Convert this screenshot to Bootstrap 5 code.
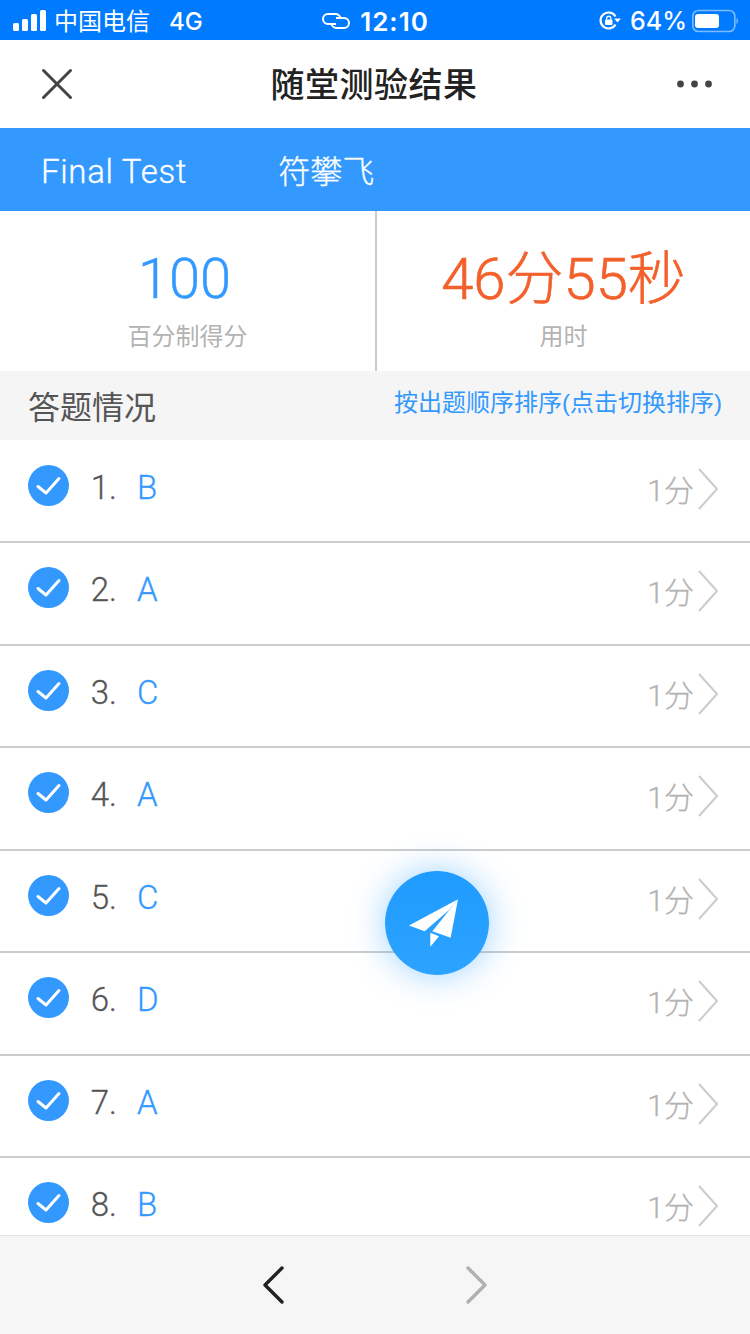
<!DOCTYPE html>
<html lang="zh">
<head>
  <meta charset="UTF-8" />
  <meta name="viewport" content="width=device-width, initial-scale=1" />
  <title>随堂测验结果</title>
  <link href="https://cdn.jsdelivr.net/npm/bootstrap@5.3.3/dist/css/bootstrap.min.css" rel="stylesheet" />
  <style>
    body {
      width: 750px;
      height: 1334px;
      overflow: hidden;
      background: #fff;
      font-family: "Liberation Sans", "Noto Sans CJK SC", sans-serif;
    }
    .screen { width: 750px; height: 1334px; overflow: hidden; }
    .status-bar {
      height: 40px;
      background: #007aff;
      color: #fff;
      font-family: Inter, "Noto Sans CJK SC", sans-serif;
      font-size: 25px;
      padding: 1px 12px 0 13px;
    }
    .status-bar span { padding-top: 2px; }
    .status-left, .status-right { width: 300px; }
    .carrier { margin-left: 8px; font-size: 24px; }
    .net { margin-left: 19px; font-size: 24px; font-weight: 500; }
    .clock { font-weight: 600; font-size: 26px; letter-spacing: 1px; margin-left: 10px; }
    .pct { font-size: 25px; font-weight: 500; margin: 0 5px 0 9px; }
    .top-nav { height: 88px; padding: 0 38px 0 41px; }
    .top-title { font-size: 34px; letter-spacing: .5px; color: #222; font-weight: 500; line-height: 91px; padding-right: 2px; }
    .test-band {
      height: 83px;
      background: #3399ff;
      color: #fff;
      font-family: Roboto, "Noto Sans CJK SC", sans-serif;
      font-weight: 300;
      font-size: 33px;
      padding: 4px 0 0 41px;
      gap: 91px;
      letter-spacing: .7px;
      -webkit-text-stroke: .3px;
    }
    .test-user { font-size: 32px; letter-spacing: 0; }
    .stats-row { height: 160px; }
    .stat-cell { width: 50%; padding-top: 32px; text-align: center; }
    .stat-cell + .stat-cell { border-left: 2px solid #ccc; }
    .stat-num {
      font-family: Roboto, "Noto Sans CJK SC", sans-serif;
      font-weight: 300;
      font-size: 56px;
      line-height: 72px;
      color: #3399ff;
      padding-right: 6px;
      -webkit-text-stroke: .4px;
    }
    .stat-time { color: #f4602c; font-size: 58px; padding-right: 0; -webkit-text-stroke: .6px; }
    .stat-cap { font-size: 24px; color: #b3b3b3; line-height: 36px; margin-top: 4px; }
    .section-head { height: 69px; background: #f5f5f5; padding: 0 28px; }
    .section-title { font-size: 32px; color: #555; line-height: 74px; }
    .section-sort { font-size: 24px; color: #3399ff; line-height: 64px; }
    .answer-list { height: 795px; padding-top: .75px; overflow: hidden; }
    .answer-row { height: 102.5px; border-bottom: 2px solid #ccc; padding: 24px 32px 0 28px; }
    .tick { width: 41px; height: 41px; flex: none; }
    .q-no, .q-ans {
      font-family: Roboto, "Noto Sans CJK SC", sans-serif;
      font-weight: 300;
      font-size: 33px;
      line-height: 44px;
      margin-top: 1px;
      -webkit-text-stroke: .3px;
    }
    .q-no { width: 48px; color: #555; text-align: right; }
    .q-ans { margin-left: 20px; color: #3399ff; }
    .q-score {
      font-family: Roboto, "Noto Sans CJK SC", sans-serif;
      font-weight: 300;
      font-size: 30px;
      color: #b3b3b3;
      line-height: 46px;
      margin-top: 3px;
      -webkit-text-stroke: .3px;
    }
    .row-arrow { width: 20px; height: 44px; margin-left: 4px; margin-top: 2px; }
    .bottom-bar { height: 99px; background: #f6f6f6; border-top: 1px solid #e4e4e4; }
    .bottom-btn { position: absolute; top: 30px; width: 24px; height: 38px; }
    .bottom-prev { left: 262px; }
    .bottom-next { left: 464px; }
    .float-send {
      position: absolute;
      left: 385px;
      top: 871px;
      width: 104px;
      height: 104px;
      border-radius: 50%;
      background: linear-gradient(to bottom, #1f9bff, #2ca3ff);
      box-shadow: 0 0 34px rgba(38, 158, 255, .45);
    }
    .float-plane { position: absolute; left: 24px; top: 28px; width: 49px; height: 48px; }
  </style>
</head>
<body>
  <div class="screen position-relative d-flex flex-column">

    <!-- Status bar -->
    <div class="status-bar d-flex align-items-center justify-content-between">
      <div class="status-left d-flex align-items-center">
        <svg width="33" height="21" viewBox="0 0 33 21" fill="#fff"><rect x="0" y="13" width="6" height="8" rx="1.5"/><rect x="9" y="9" width="6" height="12" rx="1.5"/><rect x="18" y="4" width="6" height="17" rx="1.5"/><rect x="27" y="0" width="6" height="21" rx="1.5"/></svg>
        <span class="carrier">中国电信</span>
        <span class="net">4G</span>
      </div>
      <div class="d-flex align-items-center">
        <svg width="28" height="16" viewBox="0 0 28 16" fill="none" stroke="#fff" stroke-width="2"><path d="M14 11H6a5 5 0 0 1 0-10h8a5 5 0 0 1 4.500 5"/><path d="M14 5h8a5 5 0 0 1 0 10h-8a5 5 0 0 1-4.500-5"/></svg>
        <span class="clock">12:10</span>
      </div>
      <div class="status-right d-flex align-items-center justify-content-end">
        <svg width="22" height="19" viewBox="0 0 22 19" fill="none"><path d="M16.500 13.500a8 8 0 1 1 0-8" stroke="#fff" stroke-width="2.200"/><path d="M15 7.500h7l-3.500 4z" fill="#fff"/><rect x="6" y="8.500" width="7.500" height="5.500" rx="1" fill="#fff"/><path d="M7.600 8.500V7a2.200 2.200 0 0 1 4.300 0v1.500" stroke="#fff" stroke-width="1.300"/></svg>
        <span class="pct">64%</span>
        <svg width="46" height="24" viewBox="0 0 46 24"><rect x=".8" y="1.500" width="42" height="21" rx="5.500" fill="none" stroke="#7fbcff" stroke-width="1.600"/><rect x="3" y="5" width="24" height="14" rx="3" fill="#fff"/><path d="M44.500 9c1 .5 1.500 1.500 1.500 3s-.5 2.500-1.500 3z" fill="#7fbcff"/></svg>
      </div>
    </div>

    <!-- Title nav -->
    <div class="top-nav d-flex align-items-center justify-content-between position-relative">
      <svg width="32" height="32" viewBox="0 0 32 32" stroke="#444" stroke-width="3" stroke-linecap="round"><path d="M2.500 2.500l27 27M29.500 2.500l-27 27"/></svg>
      <div class="top-title position-absolute top-0 start-50 translate-middle-x">随堂测验结果</div>
      <svg width="35" height="8" viewBox="0 0 35 8" fill="#444"><circle cx="3.500" cy="4" r="3.400"/><circle cx="17.500" cy="4" r="3.400"/><circle cx="31.500" cy="4" r="3.400"/></svg>
    </div>

    <!-- Test name -->
    <div class="test-band d-flex align-items-center">
      <span>Final Test</span>
      <span class="test-user">符攀飞</span>
    </div>

    <!-- Score and time -->
    <div class="stats-row d-flex">
      <div class="stat-cell">
        <div class="stat-num">100</div>
        <div class="stat-cap">百分制得分</div>
      </div>
      <div class="stat-cell">
        <div class="stat-num stat-time">46分55秒</div>
        <div class="stat-cap">用时</div>
      </div>
    </div>

    <div class="section-head d-flex justify-content-between">
      <span class="section-title">答题情况</span>
      <span class="section-sort">按出题顺序排序(点击切换排序)</span>
    </div>

    <!-- Answers, injected below -->
    <div class="answer-list" id="answerList"></div>

    <!-- Bottom nav -->
    <div class="bottom-bar position-relative">
      <svg class="bottom-btn bottom-prev" viewBox="0 0 24 38" fill="none" stroke="#222" stroke-width="3.400" stroke-linecap="round" stroke-linejoin="round"><path d="M20 2L3 19l17 17"/></svg>
      <svg class="bottom-btn bottom-next" viewBox="0 0 24 38" fill="none" stroke="#b0b0b0" stroke-width="3.400" stroke-linecap="round" stroke-linejoin="round"><path d="M4 2l17 17L4 36"/></svg>
    </div>

    <!-- Floating share button -->
    <div class="float-send">
      <svg class="float-plane" viewBox="118 147 147 143" fill="#fff"><path d="M118 226L265 147 240 178 165 243z"/><path d="M265 147L243 263 188 243z"/><path d="M182 248L208 258 182 290z"/></svg>
    </div>
  </div>

  <script src="https://cdn.jsdelivr.net/npm/bootstrap@5.3.3/dist/js/bootstrap.bundle.min.js"></script>
  <script>
    const answers = ['B', 'A', 'C', 'A', 'C', 'D', 'A', 'B'];
    const list = document.getElementById('answerList');

    answers.forEach((a, i) => {
      const row = document.createElement('div');
      row.className = 'answer-row d-flex align-items-start';
      row.innerHTML = `
        <svg class="tick" viewBox="0 0 41 41"><circle cx="20.500" cy="20.500" r="20.500" fill="#3399ff"/><path d="M10 21.500l8 6.500L31 13.500" fill="none" stroke="#fff" stroke-width="3" stroke-linecap="round" stroke-linejoin="round"/></svg>
        <span class="q-no">${i + 1}.</span>
        <span class="q-ans">${a}</span>
        <span class="q-score ms-auto">1分</span>
        <svg class="row-arrow" viewBox="0 0 20 44" fill="none" stroke="#ccc" stroke-width="2"><path d="M1 2l18 20L1 42"/></svg>
      `;
      list.appendChild(row);
    });
  </script>
</body>
</html>
